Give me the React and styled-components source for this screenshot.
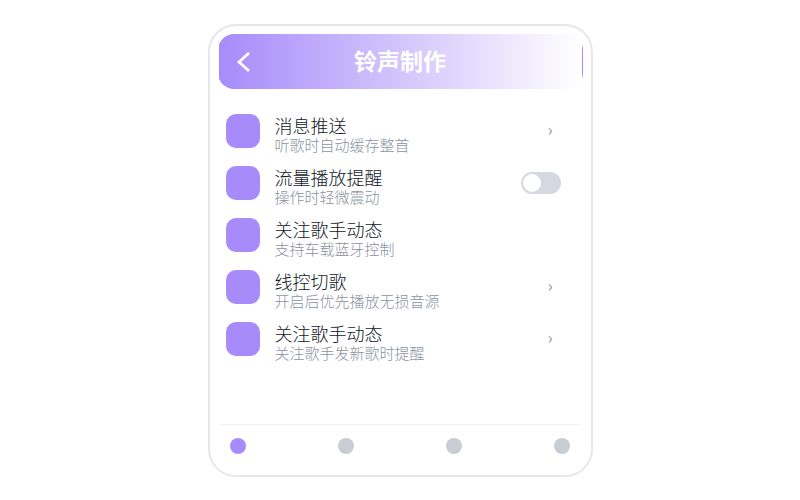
import React, { useState } from 'react'
import styled, { createGlobalStyle } from 'styled-components'

const GlobalStyle = createGlobalStyle`
*{
    box-sizing: border-box;
}

body{
    margin: 0;
    background: #fff;
    font-family: "Noto Sans CJK SC", sans-serif;
}

button{
    padding: 0;
    border: none;
    background: none;
    font: inherit;
    cursor: pointer;
}
`

const Page = styled.div`
min-height: 100vh;
padding: 24px 16px 23px;
display: flex;
justify-content: center;
`

const Card = styled.main`
width: 100%;
max-width: 385px;
padding: 8px;
display: flex;
flex-direction: column;
background: #fff;
border: 2px solid #e5e7eb;
border-radius: 28px;
`

/* the gradient repeats under the transparent border on purpose */
const Header = styled.header`
height: 55px;
margin-bottom: 16px;
padding: 0 16px;
display: grid;
grid-template-columns: 20px 1fr 20px;
align-items: center;
color: #fff;
background: linear-gradient(90deg, #a78bfa, #fff);
border: 1px solid transparent;
border-radius: 16px;
`

const BackButton = styled.button`
display: flex;
justify-content: center;
color: #fff;
`

const Heading = styled.h1`
margin: 0;
padding-bottom: 4px;
font-size: 23px;
line-height: 32px;
font-weight: 700;
text-align: center;
`

const List = styled.ul`
flex: 1;
margin: 0;
padding: 0 22px 0 8px;
list-style: none;
`

const Row = styled.li`
height: 52px;
padding-top: 9px;
display: flex;
align-items: flex-start;
gap: 15px;
`

const Tile = styled.span`
width: 34px;
height: 34px;
flex-shrink: 0;
background: #a78bfa;
border-radius: 10px;
`

const Info = styled.div`
flex: 1;
min-width: 0;
padding-top: 1px;
`

const Title = styled.div`
display: block;
font-size: 18px;
line-height: 20px;
font-weight: 300;
color: #111827;
`

const Detail = styled.div`
font-size: 15px;
line-height: 20px;
font-weight: 300;
color: #8b93a1;
`

const Action = styled.div`
height: 34px;
display: flex;
align-items: center;
`

const OpenButton = styled.button`
height: 34px;
padding: 0 8px 4px;
font-size: 16px;
line-height: 30px;
color: #8b93a1;
`

const Switch = styled.input`
appearance: none;
width: 40px;
height: 22px;
margin: 0;
padding: 2px;
display: flex;
justify-content: ${props => props.checked ? 'flex-end' : 'flex-start'};
background: ${props => props.checked ? '#a78bfa' : '#d5d8e0'};
border-radius: 11px;
cursor: pointer;

&::before{
    content: "";
    width: 18px;
    height: 18px;
    background: #fff;
    border-radius: 50%;
}
`

const TabBar = styled.nav`
height: 43px;
margin: 0 2px;
padding: 0 10px;
display: flex;
align-items: center;
justify-content: space-between;
border-top: 1px solid #f0f1f3;
`

const Tab = styled.button`
width: 16px;
height: 16px;
border-radius: 50%;

&&{
    background: ${props => props.$active ? '#a78bfa' : '#c8ccd3'};
}
`

const rows = [
    { title: '消息推送', detail: '听歌时自动缓存整首', action: 'open' },
    { title: '流量播放提醒', detail: '操作时轻微震动', action: 'switch' },
    { title: '关注歌手动态', detail: '支持车载蓝牙控制' },
    { title: '线控切歌', detail: '开启后优先播放无损音源', action: 'open' },
    { title: '关注歌手动态', detail: '关注歌手发新歌时提醒', action: 'open' },
]

const tabs = [0, 1, 2, 3]

const Setting = ({ id, title, detail, action }) => {
    const [on, setOn] = useState(false)

    return (
        <Row>
            <Tile />
            <Info>
                <Title as={action === 'switch' ? 'label' : 'div'} htmlFor={action === 'switch' ? id : undefined}>{title}</Title>
                <Detail>{detail}</Detail>
            </Info>
            <Action>
                {action === 'open' && <OpenButton type="button" aria-label={title}>›</OpenButton>}
                {action === 'switch' && (
                    <Switch id={id} type="checkbox" role="switch" checked={on} onChange={e => setOn(e.target.checked)} />
                )}
            </Action>
        </Row>
    )
}

const App = () => {
    const [active, setActive] = useState(0)

    return (
        <>
            <GlobalStyle />
            <Page>
                <Card>
                    <Header>
                        <BackButton type="button" aria-label="返回">
                            <svg width="20" height="24" viewBox="0 0 20 24" fill="none" stroke="currentColor" strokeWidth="2.8">
                                <path d="M14 3 4 12 14 21" />
                            </svg>
                        </BackButton>
                        <Heading>铃声制作</Heading>
                    </Header>
                    <List>
                        {rows.map((row, i) => <Setting key={i} id={`setting-${i}`} {...row} />)}
                    </List>
                    <TabBar>
                        {tabs.map(tab => (
                            <Tab
                            key={tab}
                            type="button"
                            aria-label={`${tab + 1}`}
                            $active={tab === active}
                            onClick={() => setActive(tab)}
                            />
                        ))}
                    </TabBar>
                </Card>
            </Page>
        </>
    )
}

export default App
